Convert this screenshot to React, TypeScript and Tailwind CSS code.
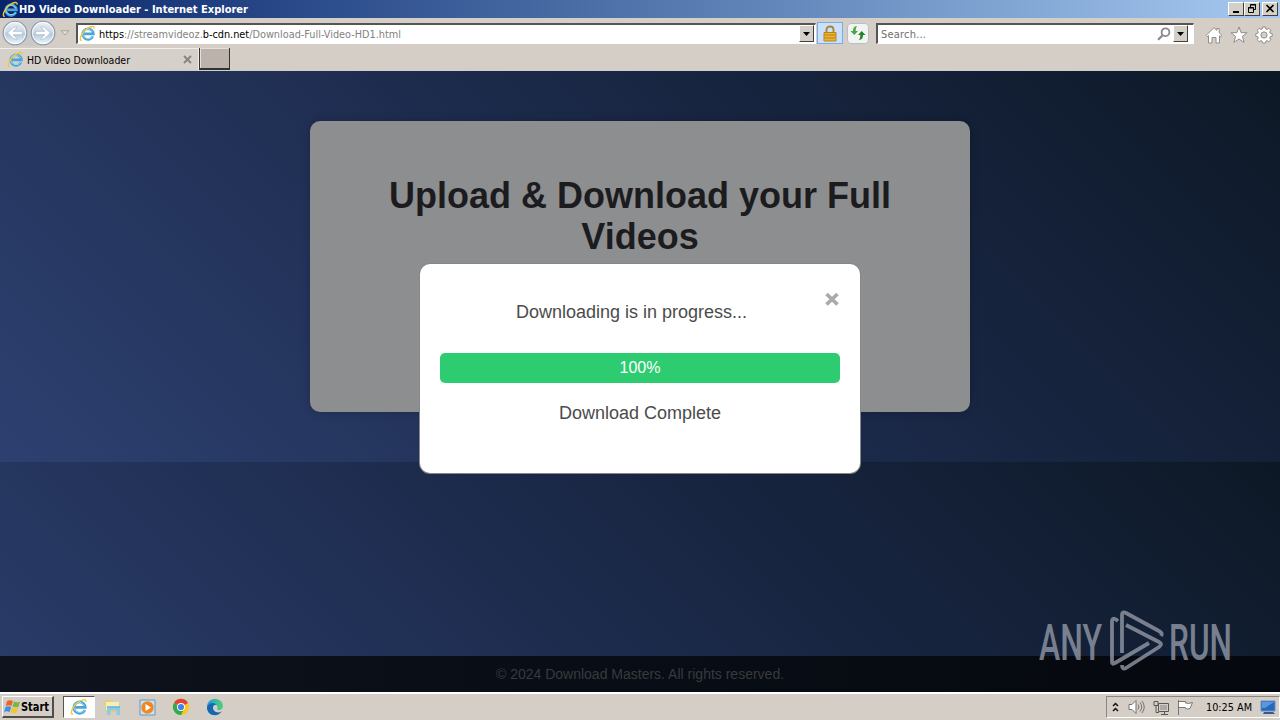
import type { ReactNode } from 'react';

function IeIcon({ size = 18 }: { size?: number }) {
  return (
    <svg width={size} height={size} viewBox="0 0 18 18" fill="none" className="shrink-0">
      <path d="M14.800 12a5.700 5.700 0 1 1 .5-2.600H5.500" stroke="#4ba4dc" strokeWidth="2.700" />
      <path d="M14.600 12.200a6.200 6.200 0 0 1-10.800-2.400M4.600 6.500a5.800 5.800 0 0 1 9.700 1" stroke="#93dbf8" strokeWidth="1" />
      <path d="M3 16.300C-1 16.500 2.800 7.500 8.800 3.800 12.500 1.200 16.500.5 16 4" stroke="#efc83b" strokeWidth="1.400" />
    </svg>
  );
}

function NavCircle({ flip }: { flip?: boolean }) {
  return (
    <svg width="26" height="26" viewBox="0 0 26 26" className={flip ? '-scale-x-100' : ''}>
      <defs>
        <linearGradient id="nav" x2="0" y2="1">
          <stop stopColor="#eef2f6" />
          <stop offset=".45" stopColor="#ccd8e4" />
          <stop offset=".55" stopColor="#b5cadd" />
          <stop offset="1" stopColor="#effcff" />
        </linearGradient>
      </defs>
      <circle cx="13" cy="13" r="11.8" fill="url(#nav)" stroke="#8d9aa6" strokeWidth="1.1" />
      <circle cx="13" cy="13" r="10.6" fill="none" stroke="#fff" strokeOpacity=".8" />
      <path d="M5.500 13l6.500-6h3.500l-4.400 4.300h9.200v3.400h-9.200l4.400 4.300H12z" fill="#fff" stroke="#a9b9c8" strokeWidth=".7" />
    </svg>
  );
}

function Caret() {
  return (
    <div className="flex h-[17px] w-[15px] shrink-0 items-center justify-center border border-t-white border-l-white border-r-[#404040] border-b-[#404040] bg-[#d4d0c8]">
      <svg width="7" height="4" viewBox="0 0 7 4"><path d="M0 0h7L3.500 4z" /></svg>
    </div>
  );
}

function WinButton({ children }: { children: ReactNode }) {
  return (
    <div className="h-[14px] w-4 border border-t-white border-l-white border-r-[#404040] border-b-[#404040] bg-[#d4d0c8]">
      <svg width="14" height="12" viewBox="0 0 14 12" fill="none" stroke="#000">{children}</svg>
    </div>
  );
}

function TitleBar() {
  return (
    <div className="flex h-[18px] items-center bg-linear-to-r from-[#0a246a] to-[#a6caf0] pr-[2px] pl-[2px]">
      <IeIcon size={17} />
      <svg width="232" height="16" className="text-[11px] font-bold">
        <text x="0" y="12" fill="#fff" textLength="229" lengthAdjust="spacingAndGlyphs">HD Video Downloader - Internet Explorer</text>
      </svg>
      <div className="ml-auto flex">
        <WinButton><path d="M4 9h6" strokeWidth="2" /></WinButton>
        <WinButton><path d="M5.500 4V1.500h5v5H9M5 2h6M3.500 4.500h5v5h-5zM3 5h6" /></WinButton>
        <div className="ml-[2px]"><WinButton><path d="M3.500 2l7 7M10.500 2l-7 7" strokeWidth="1.700" /></WinButton></div>
      </div>
    </div>
  );
}

function AddressBar() {
  return (
    <div className="flex h-[30px] items-center pl-[2px]">
      <div className="flex w-[54px] shrink-0 rounded-full bg-[#c9c9c9]">
        <NavCircle />
        <div className="ml-[2px]"><NavCircle flip /></div>
      </div>
      <svg width="10" height="6" viewBox="0 0 10 6" className="ml-[4px] shrink-0"><path d="M1 .8h8L5 5z" fill="#e4e0dc" stroke="#a7a19c" /></svg>
      <div className="ml-[6px] flex h-[21px] w-[740px] shrink-0 items-center border-t-2 border-l-2 border-r border-b border-t-[#555] border-l-[#555] border-r-white border-b-white bg-white pr-px">
        <div className="ml-px"><IeIcon size={17} /></div>
        <svg width="306" height="18" className="ml-[3px] text-[11px]">
          <text x="0" y="12.500" fill="#828282" textLength="302" lengthAdjust="spacingAndGlyphs">
            <tspan fill="#000">https</tspan>://streamvideoz.<tspan fill="#000">b-cdn.net</tspan>/Download-Full-Video-HD1.html
          </text>
        </svg>
        <div className="ml-auto"><Caret /></div>
      </div>
      <div className="ml-px flex h-[22px] w-[26px] shrink-0 items-center justify-center border border-[#7aacec] bg-[#cbe0fb]">
        <svg width="14" height="17" viewBox="0 0 14 17">
          <path d="M3.500 8V4.500C3.500 .5 10.500 .5 10.500 4.500V8" fill="none" stroke="#ac8429" strokeWidth="1.800" />
          <path d="M1 7.500h12V16H1z" fill="#e9b52e" stroke="#b58521" />
          <path d="M1.500 10h11M1.500 13h11" stroke="#b98514" />
        </svg>
      </div>
      <div className="ml-[4px] flex h-[21px] w-[22px] shrink-0 items-center justify-center rounded-sm border border-[#b7c0c7] bg-[#f2f4f3]">
        <svg width="16" height="16" viewBox="0 0 16 16">
          <path d="M7 1C4 1.500 3 3 3 6H.5L4.300 10 8 6H5.700C5.700 4 6 2.500 7 1z" fill="#42a846" />
          <path d="M9 15c3-.5 4-2 4-5h2.500L11.700 6 8 10h2.300c0 2-.3 3.500-1.300 5z" fill="#238626" />
        </svg>
      </div>
      <div className="ml-[7px] flex h-[21px] w-[318px] shrink-0 items-center border-t-2 border-l-2 border-r border-b border-t-[#555] border-l-[#555] border-r-white border-b-white bg-white pr-[5px]">
        <svg width="60" height="17" className="ml-[3px] text-[11px]"><text x="0" y="12.500" fill="#707070" textLength="45">Search...</text></svg>
        <svg width="14" height="14" viewBox="0 0 14 14" className="mr-[2px] ml-auto" fill="none" stroke="#888" strokeWidth="1.800">
          <circle cx="8.500" cy="5.200" r="3.900" /><path d="M5.700 8.200L1 12.800" strokeWidth="2.200" />
        </svg>
        <Caret />
      </div>
      <div className="mt-[4px] ml-[11px] flex shrink-0 gap-[7px]">
        <svg width="18" height="18" viewBox="0 0 18 18" fill="#fff" stroke="#918d89">
          <path d="M1 9.500L9 1.700l2.800 2.700V2.500h2.400v4.300l2.800 2.700-1.200 1.200-1.300-1V17H11v-5.500H7V17H3.500V9.700l-1.300 1z" />
        </svg>
        <svg width="18" height="18" viewBox="0 0 18 18" fill="#fff" stroke="#918d89">
          <path d="M9 1l2.100 5.700h6l-4.700 3.700 1.700 6L9 13l-5.100 3.400 1.700-6L.9 6.700h6z" />
        </svg>
        <svg width="18" height="18" viewBox="0 0 18 18" fill="#fff" stroke="#918d89">
          <path d="M7.500 1h3l.4 2 1.200.5 1.800-1.200 1.900 1.900-1.100 1.800.5 1.200 2 .4v2.800l-2 .4-.5 1.200 1.100 1.800-1.900 1.900-1.800-1.100-1.200.5-.4 2h-3l-.4-2-1.200-.5-1.800 1.100-1.900-1.900L3.300 12l-.5-1.200-2-.4V7.600l2-.4L3.300 6 2.200 4.200l1.900-1.900 1.800 1.200L7.100 3z" />
          <circle cx="9" cy="9" r="3.100" fill="#d6d0ca" />
        </svg>
      </div>
    </div>
  );
}

function TabBar() {
  return (
    <div className="flex h-[23px] border-b border-[#c7d0d2]">
      <div className="flex h-[22px] w-[199px] items-center border-t border-r border-t-[#f2eeea] border-r-[#f2eeea] bg-[#d6d0ca] pl-[7px]">
        <IeIcon size={17} />
        <svg width="110" height="18" className="ml-[3px] text-[11px]"><text x="0" y="13" textLength="103" lengthAdjust="spacingAndGlyphs">HD Video Downloader</text></svg>
        <svg width="9" height="9" viewBox="0 0 9 9" className="mr-[6px] ml-auto" stroke="#898481" strokeWidth="1.900"><path d="M1 1l7 7M8 1L1 8" /></svg>
      </div>
      <div className="h-[22px] w-[31px] border-r border-b-2 border-l border-[#343230] bg-[#bcb2ac] shadow-[inset_1px_1px_0_#e5deda]" />
    </div>
  );
}

function AnyRunLogo() {
  return (
    <svg width="204" height="66" viewBox="0 0 204 66" className="absolute top-[536px] left-[1035px] font-['Roboto','Liberation_Sans',sans-serif] text-[50px] font-medium opacity-75">
      <g fill="#9aa0ae">
        <text x="4" y="52.500" textLength="63" lengthAdjust="spacingAndGlyphs">ANY</text>
        <text x="134" y="52.500" textLength="63" lengthAdjust="spacingAndGlyphs">RUN</text>
      </g>
      <g fill="none" stroke="#9aa0ae" strokeWidth="3.800" strokeLinejoin="round">
        <path d="M83 14Q77 9 77 15V55Q77 58 80 56L114 36" />
        <path d="M87 46V8Q87 4 91 6L124 24Q128 26 126 29" />
        <path d="M91 18L124 35Q128 37 124 40L91 61Q87 63 87 58" />
      </g>
    </svg>
  );
}

function Page() {
  return (
    <main className="relative flex h-[621px] flex-col items-center overflow-hidden bg-[linear-gradient(45deg,#2d4070,#1c2a4b_50%,#0d1826)] bg-[length:100%_391px] pt-[50px] font-['Liberation_Sans',Arial,sans-serif]">
      <section className="flex h-[290.5px] w-[660px] shrink-0 justify-center rounded-[10px] bg-[#8c8e90] pt-[54px] shadow-[0_0_10px_rgba(0,0,0,0.2)]">
        <h1 className="w-[560px] text-center text-[36px] leading-[41px] font-bold text-[#1c1c1f]">Upload &amp; Download your Full Videos</h1>
      </section>
      <footer className="mt-auto flex h-[36px] w-full shrink-0 items-center justify-center bg-linear-to-r from-[#0d121c] to-[#05080e] text-sm text-[#383a3e]">
        © 2024 Download Masters. All rights reserved.
      </footer>
      {/* Download dialog */}
      <div className="absolute top-[193px] left-[420px] flex h-[209px] w-[440px] flex-col rounded-[10px] bg-white px-5 pt-5 text-[18px] text-[#4b4b4b] shadow-[0_0_0_1px_#85878a]">
        <div className="flex h-[69px] justify-between">
          <p className="mt-[18px] ml-[76px] h-5 leading-5">Downloading is in progress...</p>
          <svg width="16" height="16" viewBox="0 0 16 16" className="mt-[7px]" stroke="#aaa" strokeWidth="3.700"><path d="M2.500 3l11 10.500M13.500 3l-11 10.500" /></svg>
        </div>
        <div className="flex h-[30px] shrink-0 items-center justify-center rounded-[5px] bg-[#2ecc71] text-base text-white">100%</div>
        <p className="mt-5 text-center leading-5">Download Complete</p>
      </div>
      <AnyRunLogo />
    </main>
  );
}

function Taskbar() {
  return (
    <footer className="flex h-[28px] items-center border-t-2 border-white bg-[#d5cec7] pl-[2px]">
      <div className="flex h-[22px] w-[52px] items-center border-t border-r-2 border-b-2 border-l border-t-white border-r-[#504c48] border-b-[#504c48] border-l-white pl-px">
        <svg width="17" height="16" viewBox="0 0 17 16">
          <path d="M3 2q3-1.500 6 0L7.500 7q-3-1.500-5.700 0z" fill="#ed632a" /><path d="M10 2.500q3 1.500 6 .2l-1.500 5q-3 1.300-6-.2z" fill="#78b83c" />
          <path d="M1.500 8q3-1.500 5.700 0l-1.500 5q-3-1.500-5.700 0z" fill="#4291df" /><path d="M8.200 8.500q3 1.500 6 .2l-1.500 5q-3 1.300-6-.2z" fill="#f3c52f" />
        </svg>
        <svg width="31" height="17" className="text-[11.500px] font-bold"><text x="0" y="12.500" textLength="28" lengthAdjust="spacingAndGlyphs">Start</text></svg>
      </div>
      <div className="ml-[9px] flex h-[22px] w-[32px] items-center justify-center border border-t-[#555] border-l-[#555] border-r-white border-b-white bg-white"><IeIcon size={18} /></div>
      <svg width="18" height="18" viewBox="0 0 18 18" className="ml-[9px]">
        <path d="M1 2h6l1 2h8v10H1z" fill="#e7cc74" /><path d="M2 4h13v8H2z" fill="#f8edb5" /><path d="M3 17V8.500h13V17h-3.500v-4.500h-6V17z" fill="#8bcbe6" /><path d="M3 9h13" stroke="#4faad1" />
      </svg>
      <svg width="17" height="17" viewBox="0 0 17 17" className="ml-[17px]">
        <path d="M1 1h15v15H1z" fill="#cce2f2" stroke="#6398c4" /><circle cx="8.500" cy="8.500" r="6.200" fill="#ef881f" /><path d="M6.500 5v7L12 8.500z" fill="#fff" />
      </svg>
      <svg width="18" height="18" viewBox="0 0 18 18" className="ml-[16px]">
        <circle cx="9" cy="9" r="8" fill="#fbc719" /><path d="M9 9L2 5a8 8 0 0 1 14 0z" fill="#e44335" /><path d="M9 9L2 5a8 8 0 0 0 7 12l3-6z" fill="#32a952" /><circle cx="9" cy="9" r="4" fill="#fff" /><circle cx="9" cy="9" r="3.100" fill="#4084ed" />
      </svg>
      <svg width="18" height="18" viewBox="0 0 18 18" className="ml-[16px]">
        <defs><linearGradient id="edge"><stop stopColor="#219bd8" /><stop offset="1" stopColor="#52cf76" /></linearGradient></defs>
        <path d="M1 9C1-2 17-1 17 8c0 4-5 5-6 3 2-3-1-5-4-4-3 1-4 7 1 10-4 0-7-3-7-8z" fill="url(#edge)" /><path d="M1 9c2-5 8-5 9-2-4-1-4 6 0 7 3 1 5 0 6-1-4 7-15 5-15-4z" fill="#1766b2" />
      </svg>
      <div className="ml-auto flex h-[22px] w-[174px] items-center border border-t-[#8b8681] border-l-[#8b8681] border-r-white border-b-white pr-[3px] pl-[5px]">
        <svg width="7" height="10" viewBox="0 0 7 10" fill="none" stroke="#111" strokeWidth="1.500"><path d="M1 4l2.500-2.500L6 4M1 9l2.500-2.500L6 9" /></svg>
        <svg width="17" height="16" viewBox="0 0 17 16" className="ml-[9px]" fill="#fff" stroke="#77736f"><path d="M1 5.500h3l4-4v13l-4-4H1z" /><path d="M10 5.500q2 2.500 0 5M12 3.500q3.500 4.500 0 9M14 2q4.500 6 0 12" fill="none" /></svg>
        <svg width="17" height="17" viewBox="0 0 17 17" className="ml-[8px]" fill="none" stroke="#5b5855"><path d="M5.500 4.500h10v8h-10zM8 15.500h7M11.500 12v3M1 2.500h4v4H1zM3 6v7.500h3" /><path d="M7 6h7v5H7z" fill="#aaa" stroke="none" /></svg>
        <svg width="17" height="17" viewBox="0 0 17 17" className="ml-[7px]" fill="#fff" stroke="#777"><path d="M1.500 1v15M1.500 2.500h7v1.500q3 1 7-.500l-2.500 6q-3 1-4.500 0V8.500h-7z" /></svg>
        <svg width="48" height="17" className="ml-[12px] text-[11px]"><text x="0" y="12" textLength="46" lengthAdjust="spacingAndGlyphs">10:25 AM</text></svg>
        <svg width="16" height="16" viewBox="0 0 16 16" className="ml-auto"><path d="M1 2h14v10H1z" fill="#2868bb" stroke="#6391c6" /><path d="M2 3h12L5 9H2z" fill="#5996da" /><path d="M4 13h9l2 2H3z" fill="#3a5a83" /></svg>
      </div>
    </footer>
  );
}

export default function App() {
  return (
    <div className="flex h-[720px] w-[1280px] flex-col overflow-hidden bg-[#d5cec7] font-['DejaVu_Sans_Condensed','DejaVu_Sans',sans-serif]">
      <header className="h-[71px]"><TitleBar /><AddressBar /><TabBar /></header>
      <Page />
      <Taskbar />
    </div>
  );
}
